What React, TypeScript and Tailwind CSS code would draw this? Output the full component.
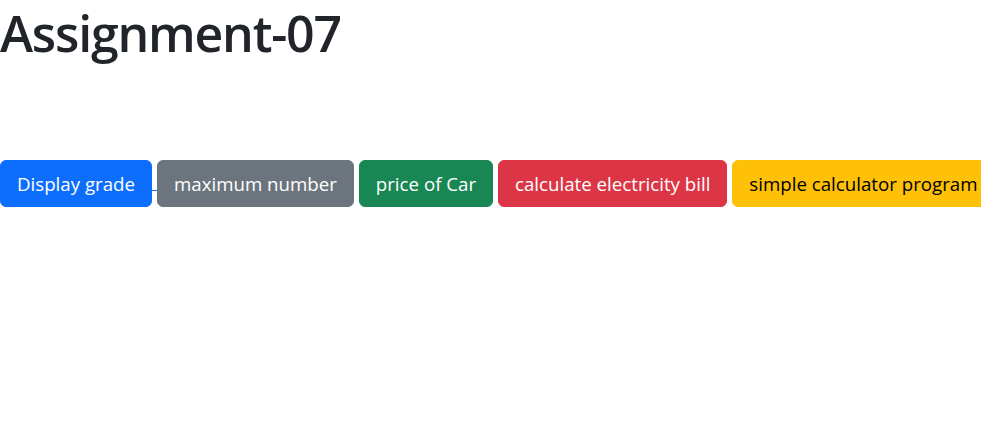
import React from "react";

const btn =
  "inline-block align-middle rounded-[6px] border border-solid px-4 py-2 text-[18.7px] leading-[29px] whitespace-nowrap";

export default function App() {
  return (
    <div
      className="bg-white text-[#212529] w-[981px] h-[436px] overflow-hidden"
      style={{ fontFamily: '"Open Sans", "Noto Sans", sans-serif' }}
    >
      <h1 className="m-0 pt-[1px] text-[50px] leading-[64px] font-semibold tracking-[-1.2px]">
        Assignment-07
      </h1>
      <div className="mt-[95px] whitespace-nowrap text-[19px] leading-[24px]">
        <a href="#" className="text-[#0d6efd] underline decoration-[#0d6efd]">
          <button className={`${btn} bg-[#0d6efd] border-[#0d6efd] text-white`}>
            Display grade
          </button>{" "}
        </a>
        <button className={`${btn} bg-[#6c757d] border-[#6c757d] text-white`}>
          maximum number
        </button>{" "}
        <button className={`${btn} bg-[#198754] border-[#198754] text-white`}>
          price of Car
        </button>{" "}
        <button className={`${btn} bg-[#dc3545] border-[#dc3545] text-white`}>
          calculate electricity bill
        </button>{" "}
        <button className={`${btn} bg-[#ffc107] border-[#ffc107] text-black`}>
          simple calculator program
        </button>
      </div>
    </div>
  );
}
